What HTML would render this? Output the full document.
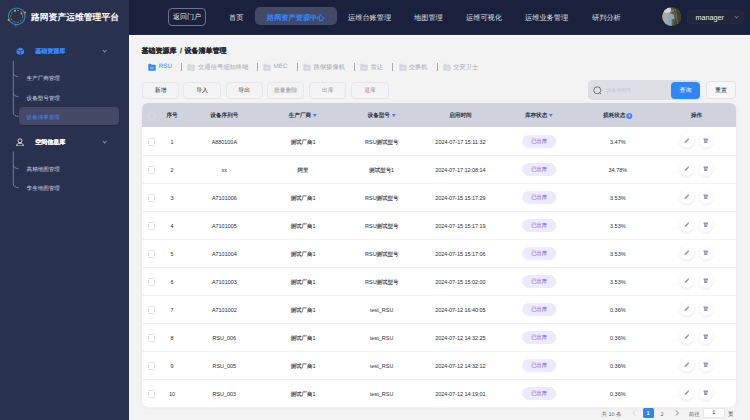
<!DOCTYPE html>
<html><head><meta charset="utf-8"><style>
*{margin:0;padding:0;box-sizing:border-box}
html,body{width:750px;height:420px;overflow:hidden;background:#f3f3f4;font-family:"Liberation Sans",sans-serif;position:relative;text-rendering:geometricPrecision}
.abs{position:absolute}
b,i{font-style:normal}
#side{position:absolute;left:0;top:0;width:129px;height:420px;background:#28324f}
#hdr{position:absolute;left:129px;top:0;width:621px;height:35px;background:#1a213c;border-bottom:0.6px solid #232a48}
#mainedge{position:absolute;left:129px;top:35px;width:621px;height:385px;border-top:1px solid #fbfbfc;border-left:1px solid #fbfbfc}
.title{position:absolute;left:31px;top:11.3px;font-size:8.8px;font-weight:bold;color:#fff;white-space:nowrap;line-height:12px}
.nav{position:absolute;top:9.3px;font-weight:500;height:17px;line-height:17px;font-size:7.2px;color:#dfe2ea;white-space:nowrap}
.portal{position:absolute;left:167.8px;top:8px;width:38.4px;height:18px;border:0.7px solid #6f7590;border-radius:4px;font-size:7px;color:#e6e8ef;text-align:center;line-height:16.2px;padding-top:1px;font-weight:500}
.pill{position:absolute;left:254.7px;top:7.1px;width:82px;height:18.3px;border-radius:5px;background:#434a67;color:#3088ff;font-size:7.2px;line-height:20.5px;padding-top:0.6px;text-align:center;font-weight:bold}
.avatar{position:absolute;left:662px;top:7.3px;width:19.3px;height:19.3px;border-radius:50%;background:linear-gradient(100deg,#9aa89a 0%,#7d9cc0 30%,#6b7f8a 45%,#5a5e44 65%,#3f4632 100%)}
.usr{position:absolute;left:686.7px;top:9.6px;width:57.3px;height:14.7px;border-radius:3px;background:#22263c;border:0.6px solid #262a40;color:#eceef2;font-size:7.2px;line-height:13.5px;padding-left:7.8px;text-rendering:optimizeLegibility}
.usr .chev{position:absolute;right:4.5px;top:4.8px;width:3px;height:3px;border-right:0.7px solid #6a7088;border-bottom:0.7px solid #6a7088;transform:rotate(45deg)}
.menu{position:absolute;left:35.3px;margin-top:1px;font-size:6px;white-space:nowrap;line-height:8px;font-weight:bold;-webkit-text-stroke:0.1px currentColor}
.sub{position:absolute;left:26.6px;margin-top:1.3px;font-weight:500;font-size:5.55px;color:#d8dbe4;white-space:nowrap;line-height:8px}
.schev{position:absolute;width:3.2px;height:3.2px;border-right:0.8px solid #8a90a8;border-bottom:0.8px solid #8a90a8;transform:rotate(45deg)}
.bc{position:absolute;left:141.6px;top:47.4px;font-size:7px;font-weight:bold;-webkit-text-stroke:0.1px currentColor;color:#1f2430;white-space:nowrap;line-height:10px}
.tab{position:absolute;top:63.8px;font-weight:500;font-size:6.3px;color:#a4a8b4;white-space:nowrap;line-height:8px}
.fold{position:absolute;top:62.7px;width:8px;height:8px}
.sep{position:absolute;top:62.5px;width:0.7px;height:8.3px;background:#a3a7b1}
.btn{position:absolute;top:82px;font-weight:500;width:37.3px;height:16.8px;border:0.7px solid #e6e7eb;border-radius:4px;background:#f3f3f5;font-size:5.8px;color:#1c1f26;text-align:center;line-height:15.4px;padding-top:1.1px}
.search{position:absolute;left:588px;top:80.2px;width:112px;height:19.7px;border-radius:4.5px;background:#dedfe5}
.qbtn{position:absolute;left:670.7px;top:81.8px;width:29.5px;height:17.2px;border-radius:4px;background:#2f86f6;color:#fff;font-size:6px;text-align:center;line-height:17.2px;padding-top:0.8px}
.rbtn{position:absolute;left:706px;top:81.3px;width:30px;height:17.7px;border-radius:4px;background:#f7f7f9;border:0.7px solid #e2e3e7;color:#222;font-size:6px;text-align:center;line-height:16.3px;padding-top:0.8px}
.card{position:absolute;left:142px;top:103.2px;width:593.8px;height:304.2px;background:#fff;border-radius:6px;box-shadow:0 1px 4px rgba(0,0,0,0.06)}
.thead{position:absolute;left:142px;top:103.2px;width:593.8px;height:24.2px;background:#d0d3de;border-radius:6px 6px 0 0}
.thead .h{position:absolute;top:1.8px;height:23.6px;line-height:23.6px;font-size:5.6px;font-weight:bold;color:#2a2f3c;transform:translateX(-50%);white-space:nowrap;margin-left:-142px}
.tri{display:inline-block;width:0;height:0;border-left:2.8px solid transparent;border-right:2.8px solid transparent;border-top:3.3px solid #3a86ff;margin-left:2px;margin-top:-0.5px;vertical-align:middle}
.info{display:inline-block;width:6px;height:6px;border-radius:50%;background:#3a86ff;color:#fff;font-size:4.5px;line-height:6px;text-align:center;font-style:normal;margin-left:1px;vertical-align:middle;letter-spacing:0}
.row{position:absolute;left:0;width:750px;height:28px}
.row::after{content:"";position:absolute;left:142px;width:593.8px;bottom:0;height:0.7px;background:#f0f1f4}
.row .c{position:absolute;top:0.5px;height:28px;line-height:28px;font-size:5.45px;color:#262a33;text-rendering:optimizeLegibility;transform:translateX(-50%);white-space:nowrap}
.z{font-weight:500;text-rendering:geometricPrecision;-webkit-text-stroke:0.12px currentColor}
.cb{position:absolute;left:148px;top:11px;width:7.2px;height:7.2px;border:0.7px solid #dfe1e6;border-radius:1.5px;background:#fff}
.hcb{top:8.4px;background:transparent;border-color:#d8dae2;margin-left:-142px}
.tag{position:absolute;top:7.9px;width:33.7px;height:13px;border-radius:6.5px;background:#edeafb;color:#8c76ee;-webkit-text-stroke:0.12px currentColor;font-size:5.3px;line-height:13px;padding-top:0.8px;text-align:center;transform:translateX(-50%)}
.ob{position:absolute;top:6.1px;width:14.6px;height:14.6px;border-radius:50%;background:#fff;box-shadow:0 0.8px 2.2px rgba(40,40,90,0.12);display:flex;align-items:center;justify-content:center}
.pg{position:absolute;top:409.6px;height:10px;line-height:10px;font-size:5.45px;color:#555;white-space:nowrap}

</style></head><body>
<div id="side"></div>
<div id="hdr"></div>
<div id="mainedge"></div>
<!-- logo -->
<svg class="abs" style="left:6px;top:6px" width="22" height="22" viewBox="0 0 22 22">
<circle cx="10.7" cy="10.3" r="8.3" fill="none" stroke="#2b88c8" stroke-width="1.1"/>
<circle cx="10.7" cy="10.3" r="6" fill="none" stroke="#c88a2a" stroke-width="0.8" stroke-dasharray="2 1.5"/>
<circle cx="9" cy="4.7" r="1" fill="#f0a020"/><circle cx="15.5" cy="7.5" r="0.9" fill="#f0a020"/><circle cx="19" cy="6.5" r="0.9" fill="#f0a020"/><circle cx="2.5" cy="14" r="0.9" fill="#f0a020"/>
<path d="M9.5 18.5 L10 20.5" stroke="#2a8fd4" stroke-width="1"/>
</svg>
<div class="title">路网资产运维管理平台</div>
<!-- header nav -->
<div class="portal">返回门户</div>
<div class="nav" style="left:229px">首页</div>
<div class="pill">路网资产资源中心</div>
<div class="nav" style="left:348px">运维台账管理</div>
<div class="nav" style="left:414px">地图管理</div>
<div class="nav" style="left:466px">运维可视化</div>
<div class="nav" style="left:525px">运维业务管理</div>
<div class="nav" style="left:592px">研判分析</div>
<svg class="abs" style="left:662px;top:7.3px" width="19.3" height="19.3" viewBox="0 0 20 20"><defs><clipPath id="av"><circle cx="10" cy="10" r="9.8"/></clipPath></defs><g clip-path="url(#av)"><rect width="20" height="20" fill="#5d6048"/><rect x="0" y="0" width="8" height="20" fill="#a9ab9b"/><ellipse cx="5.5" cy="3" rx="4" ry="3" fill="#d0d6da"/><path d="M6 20 L6.5 11 Q7 7 9 6.5 L12 8 L13 12 L10 13 L10 20 Z" fill="#86a6cc"/><path d="M12 4 Q15 6 14 12 L12 20 H20 V0 H12 Z" fill="#3d452f"/><path d="M14 2 L16 18" stroke="#7a6a4a" stroke-width="1"/><path d="M9 5 L13 3" stroke="#b09070" stroke-width="1"/></g></svg>
<div class="usr">manager<i class="chev"></i></div>
<!-- sidebar menu -->
<svg class="abs" style="left:15.5px;top:46.8px" width="8.6" height="8.6" viewBox="0 0 10 10">
<path d="M5 0.5 L9.3 2.8 V7.4 L5 9.6 L0.7 7.4 V2.8 Z" fill="#3a86ff"/>
<path d="M0.9 2.9 L5 5 L9.1 2.9 M5 5 V9.5" fill="none" stroke="#28324f" stroke-width="0.8"/>
</svg>
<div class="menu" style="top:47px;color:#3a86ff">基础资源库</div>
<i class="schev" style="left:102.5px;top:48.5px"></i>
<svg class="abs" style="left:0;top:0" width="30" height="200" viewBox="0 0 30 200"><g fill="none" stroke="#8a90a5" stroke-width="0.75"><path d="M13.3 60.8 V112.5 Q13.3 116.3 18.8 116.3"/><path d="M13.3 73.5 Q14 76.3 18.3 76.8"/><path d="M13.3 93.5 Q14 96.3 18.3 96.8"/><path d="M13.3 151.5 V183.5 Q13.3 187.5 18.8 187.7"/><path d="M13.3 165.5 Q14 168.3 18.3 168.8"/></g></svg>
<div class="sub" style="top:73.8px">生产厂商管理</div>
<div class="sub" style="top:93.5px">设备型号管理</div>
<div class="abs" style="left:18.8px;top:106.7px;width:100px;height:18.2px;border-radius:4px;background:#444a66;box-shadow:0 1px 2px rgba(10,15,30,0.25)"></div>
<div class="sub" style="top:112.3px;color:#3d8cff">设备清单管理</div>
<svg class="abs" style="left:16px;top:137.5px" width="8" height="8.5" viewBox="0 0 8 8.5">
<circle cx="4" cy="2.8" r="2" fill="none" stroke="#fff" stroke-width="0.8"/>
<path d="M0.6 8 C0.8 5.8 2.2 5.2 4 5.2 C5.8 5.2 7.2 5.8 7.4 8 Z" fill="none" stroke="#fff" stroke-width="0.8"/>
</svg>
<div class="menu" style="top:138px;color:#fff">空间信息库</div>
<i class="schev" style="left:102.5px;top:139.5px"></i>

<div class="sub" style="top:165.2px">高精地图管理</div>
<div class="sub" style="top:183.7px">孪生地图管理</div>
<!-- breadcrumb -->
<div class="bc">基础资源库<span style="margin:0 2.6px 0 3.4px">/</span>设备清单管理</div>
<svg class="fold" style="left:148px" viewBox="0 0 8 8"><path d="M0.3 1.6 Q0.3 0.8 1.1 0.8 H3 L3.8 1.7 H6.9 Q7.7 1.7 7.7 2.5 V6.9 Q7.7 7.7 6.9 7.7 H1.1 Q0.3 7.7 0.3 6.9 Z" fill="#3a86ff"/><path d="M2.2 5 H5.8" stroke="#fff" stroke-width="0.8"/></svg>
<div class="tab" style="left:158.8px;top:62.8px;color:#3a86ff">RSU</div>
<div class="sep" style="left:180.7px"></div>
<svg class="fold" style="left:187px" viewBox="0 0 8 8"><path d="M0.3 1.6 Q0.3 0.8 1.1 0.8 H3 L3.8 1.7 H6.9 Q7.7 1.7 7.7 2.5 V6.9 Q7.7 7.7 6.9 7.7 H1.1 Q0.3 7.7 0.3 6.9 Z" fill="#d3d6de"/><path d="M2.2 5 H5.8" stroke="#eef0f4" stroke-width="0.8"/></svg>
<div class="tab" style="left:198px">交通信号感知终端</div>
<div class="sep" style="left:256.7px"></div>
<svg class="fold" style="left:263px" viewBox="0 0 8 8"><path d="M0.3 1.6 Q0.3 0.8 1.1 0.8 H3 L3.8 1.7 H6.9 Q7.7 1.7 7.7 2.5 V6.9 Q7.7 7.7 6.9 7.7 H1.1 Q0.3 7.7 0.3 6.9 Z" fill="#d3d6de"/><path d="M2.2 5 H5.8" stroke="#eef0f4" stroke-width="0.8"/></svg>
<div class="tab" style="left:273.5px;top:62.8px">MEC</div>
<div class="sep" style="left:296.7px"></div>
<svg class="fold" style="left:303px" viewBox="0 0 8 8"><path d="M0.3 1.6 Q0.3 0.8 1.1 0.8 H3 L3.8 1.7 H6.9 Q7.7 1.7 7.7 2.5 V6.9 Q7.7 7.7 6.9 7.7 H1.1 Q0.3 7.7 0.3 6.9 Z" fill="#d3d6de"/><path d="M2.2 5 H5.8" stroke="#eef0f4" stroke-width="0.8"/></svg>
<div class="tab" style="left:313.5px">路侧摄像机</div>
<div class="sep" style="left:353.5px"></div>
<svg class="fold" style="left:360px" viewBox="0 0 8 8"><path d="M0.3 1.6 Q0.3 0.8 1.1 0.8 H3 L3.8 1.7 H6.9 Q7.7 1.7 7.7 2.5 V6.9 Q7.7 7.7 6.9 7.7 H1.1 Q0.3 7.7 0.3 6.9 Z" fill="#d3d6de"/><path d="M2.2 5 H5.8" stroke="#eef0f4" stroke-width="0.8"/></svg>
<div class="tab" style="left:370.5px">雷达</div>
<div class="sep" style="left:392px"></div>
<svg class="fold" style="left:398.8px" viewBox="0 0 8 8"><path d="M0.3 1.6 Q0.3 0.8 1.1 0.8 H3 L3.8 1.7 H6.9 Q7.7 1.7 7.7 2.5 V6.9 Q7.7 7.7 6.9 7.7 H1.1 Q0.3 7.7 0.3 6.9 Z" fill="#d3d6de"/><path d="M2.2 5 H5.8" stroke="#eef0f4" stroke-width="0.8"/></svg>
<div class="tab" style="left:408.7px">交换机</div>
<div class="sep" style="left:436.7px"></div>
<svg class="fold" style="left:443px" viewBox="0 0 8 8"><path d="M0.3 1.6 Q0.3 0.8 1.1 0.8 H3 L3.8 1.7 H6.9 Q7.7 1.7 7.7 2.5 V6.9 Q7.7 7.7 6.9 7.7 H1.1 Q0.3 7.7 0.3 6.9 Z" fill="#d3d6de"/><path d="M2.2 5 H5.8" stroke="#eef0f4" stroke-width="0.8"/></svg>
<div class="tab" style="left:453px">交安卫士</div>
<!-- buttons -->
<div class="btn" style="left:142px">新增</div>
<div class="btn" style="left:183.3px">导入</div>
<div class="btn" style="left:225.5px">导出</div>
<div class="btn" style="left:267px;color:#8a8d96">批量删除</div>
<div class="btn" style="left:309px;color:#8a8d96">出库</div>
<div class="btn" style="left:351.3px;color:#8a8d96">退库</div>
<div class="search"></div>
<svg class="abs" style="left:592.5px;top:85.5px" width="9.5" height="9.5" viewBox="0 0 10 10">
<circle cx="4.5" cy="4.5" r="3.7" fill="none" stroke="#4a4d55" stroke-width="0.75"/><path d="M7.1 7.1 L8.4 8.4" stroke="#4a4d55" stroke-width="0.75"/>
</svg>
<div class="abs" style="left:606.2px;top:86.6px;font-size:5px;color:#bfc2ca;line-height:8px">设备序列号</div>
<div class="qbtn">查询</div>
<div class="rbtn">重置</div>
<!-- table -->
<div class="card"></div>
<div class="thead"><span class="cb hcb"></span><span class="h" style="left:172px">序号</span><span class="h" style="left:224.34px">设备序列号</span><span class="h" style="left:303.03px">生产厂商<i class="tri"></i></span><span class="h" style="left:381.73px">设备型号<i class="tri"></i></span><span class="h" style="left:460.41px">启用时间</span><span class="h" style="left:539.11px">库存状态<i class="tri"></i></span><span class="h" style="left:617.80px">损耗状态<i class="info">i</i></span><span class="h" style="left:696.49px">操作</span></div>
<div class="row" style="top:127.40px"><span class="cb"></span><span class="c" style="left:172px">1</span><span class="c" style="left:224.34px">A880100A</span><span class="c" style="left:303.03px"><b class="z">测试厂商</b>1</span><span class="c" style="left:381.73px">RSU<b class="z">测试型号</b></span><span class="c" style="left:460.41px">2024-07-17 15:11:32</span><span class="tag" style="left:539.11px">已出库</span><span class="c" style="left:617.80px">3.47%</span><span class="ob" style="left:679.38px"><svg viewBox="0 0 10 10" width="7.5" height="7.5"><path d="M2 8 L2.4 6.2 L6.7 1.9 Q7.2 1.5 7.7 1.9 L8.1 2.3 Q8.5 2.8 8.1 3.3 L3.8 7.6 Z" fill="#9092b3"/><path d="M6.2 2.6 L7.4 3.8" stroke="#fff" stroke-width="0.5"/></svg></span><span class="ob" style="left:698.78px"><svg viewBox="0 0 10 10" width="7.5" height="7.5"><path d="M1.9 2 H8.1 V3.5 H1.9 Z M2.7 3.5 H7.3 L6.9 8 H3.1 Z" fill="#9092b3"/><path d="M3.3 5.2 H6.7" stroke="#fff" stroke-width="0.6"/></svg></span></div><div class="row" style="top:155.40px"><span class="cb"></span><span class="c" style="left:172px">2</span><span class="c" style="left:224.34px">xx</span><span class="c" style="left:303.03px"><b class="z">阿里</b></span><span class="c" style="left:381.73px"><b class="z">测试型号</b>1</span><span class="c" style="left:460.41px">2024-07-17 12:08:14</span><span class="tag" style="left:539.11px">已出库</span><span class="c" style="left:617.80px">34.78%</span><span class="ob" style="left:679.38px"><svg viewBox="0 0 10 10" width="7.5" height="7.5"><path d="M2 8 L2.4 6.2 L6.7 1.9 Q7.2 1.5 7.7 1.9 L8.1 2.3 Q8.5 2.8 8.1 3.3 L3.8 7.6 Z" fill="#9092b3"/><path d="M6.2 2.6 L7.4 3.8" stroke="#fff" stroke-width="0.5"/></svg></span><span class="ob" style="left:698.78px"><svg viewBox="0 0 10 10" width="7.5" height="7.5"><path d="M1.9 2 H8.1 V3.5 H1.9 Z M2.7 3.5 H7.3 L6.9 8 H3.1 Z" fill="#9092b3"/><path d="M3.3 5.2 H6.7" stroke="#fff" stroke-width="0.6"/></svg></span></div><div class="row" style="top:183.40px"><span class="cb"></span><span class="c" style="left:172px">3</span><span class="c" style="left:224.34px">A7101006</span><span class="c" style="left:303.03px"><b class="z">测试厂商</b>1</span><span class="c" style="left:381.73px">RSU<b class="z">测试型号</b></span><span class="c" style="left:460.41px">2024-07-15 15:17:29</span><span class="tag" style="left:539.11px">已出库</span><span class="c" style="left:617.80px">3.53%</span><span class="ob" style="left:679.38px"><svg viewBox="0 0 10 10" width="7.5" height="7.5"><path d="M2 8 L2.4 6.2 L6.7 1.9 Q7.2 1.5 7.7 1.9 L8.1 2.3 Q8.5 2.8 8.1 3.3 L3.8 7.6 Z" fill="#9092b3"/><path d="M6.2 2.6 L7.4 3.8" stroke="#fff" stroke-width="0.5"/></svg></span><span class="ob" style="left:698.78px"><svg viewBox="0 0 10 10" width="7.5" height="7.5"><path d="M1.9 2 H8.1 V3.5 H1.9 Z M2.7 3.5 H7.3 L6.9 8 H3.1 Z" fill="#9092b3"/><path d="M3.3 5.2 H6.7" stroke="#fff" stroke-width="0.6"/></svg></span></div><div class="row" style="top:211.40px"><span class="cb"></span><span class="c" style="left:172px">4</span><span class="c" style="left:224.34px">A7101005</span><span class="c" style="left:303.03px"><b class="z">测试厂商</b>1</span><span class="c" style="left:381.73px">RSU<b class="z">测试型号</b></span><span class="c" style="left:460.41px">2024-07-15 15:17:19</span><span class="tag" style="left:539.11px">已出库</span><span class="c" style="left:617.80px">3.53%</span><span class="ob" style="left:679.38px"><svg viewBox="0 0 10 10" width="7.5" height="7.5"><path d="M2 8 L2.4 6.2 L6.7 1.9 Q7.2 1.5 7.7 1.9 L8.1 2.3 Q8.5 2.8 8.1 3.3 L3.8 7.6 Z" fill="#9092b3"/><path d="M6.2 2.6 L7.4 3.8" stroke="#fff" stroke-width="0.5"/></svg></span><span class="ob" style="left:698.78px"><svg viewBox="0 0 10 10" width="7.5" height="7.5"><path d="M1.9 2 H8.1 V3.5 H1.9 Z M2.7 3.5 H7.3 L6.9 8 H3.1 Z" fill="#9092b3"/><path d="M3.3 5.2 H6.7" stroke="#fff" stroke-width="0.6"/></svg></span></div><div class="row" style="top:239.40px"><span class="cb"></span><span class="c" style="left:172px">5</span><span class="c" style="left:224.34px">A7101004</span><span class="c" style="left:303.03px"><b class="z">测试厂商</b>1</span><span class="c" style="left:381.73px">RSU<b class="z">测试型号</b></span><span class="c" style="left:460.41px">2024-07-15 15:17:06</span><span class="tag" style="left:539.11px">已出库</span><span class="c" style="left:617.80px">3.53%</span><span class="ob" style="left:679.38px"><svg viewBox="0 0 10 10" width="7.5" height="7.5"><path d="M2 8 L2.4 6.2 L6.7 1.9 Q7.2 1.5 7.7 1.9 L8.1 2.3 Q8.5 2.8 8.1 3.3 L3.8 7.6 Z" fill="#9092b3"/><path d="M6.2 2.6 L7.4 3.8" stroke="#fff" stroke-width="0.5"/></svg></span><span class="ob" style="left:698.78px"><svg viewBox="0 0 10 10" width="7.5" height="7.5"><path d="M1.9 2 H8.1 V3.5 H1.9 Z M2.7 3.5 H7.3 L6.9 8 H3.1 Z" fill="#9092b3"/><path d="M3.3 5.2 H6.7" stroke="#fff" stroke-width="0.6"/></svg></span></div><div class="row" style="top:267.40px"><span class="cb"></span><span class="c" style="left:172px">6</span><span class="c" style="left:224.34px">A7101003</span><span class="c" style="left:303.03px"><b class="z">测试厂商</b>1</span><span class="c" style="left:381.73px">RSU<b class="z">测试型号</b></span><span class="c" style="left:460.41px">2024-07-15 15:02:00</span><span class="tag" style="left:539.11px">已出库</span><span class="c" style="left:617.80px">3.53%</span><span class="ob" style="left:679.38px"><svg viewBox="0 0 10 10" width="7.5" height="7.5"><path d="M2 8 L2.4 6.2 L6.7 1.9 Q7.2 1.5 7.7 1.9 L8.1 2.3 Q8.5 2.8 8.1 3.3 L3.8 7.6 Z" fill="#9092b3"/><path d="M6.2 2.6 L7.4 3.8" stroke="#fff" stroke-width="0.5"/></svg></span><span class="ob" style="left:698.78px"><svg viewBox="0 0 10 10" width="7.5" height="7.5"><path d="M1.9 2 H8.1 V3.5 H1.9 Z M2.7 3.5 H7.3 L6.9 8 H3.1 Z" fill="#9092b3"/><path d="M3.3 5.2 H6.7" stroke="#fff" stroke-width="0.6"/></svg></span></div><div class="row" style="top:295.40px"><span class="cb"></span><span class="c" style="left:172px">7</span><span class="c" style="left:224.34px">A7101002</span><span class="c" style="left:303.03px"><b class="z">测试厂商</b>1</span><span class="c" style="left:381.73px">test_RSU</span><span class="c" style="left:460.41px">2024-07-12 16:40:05</span><span class="tag" style="left:539.11px">已出库</span><span class="c" style="left:617.80px">0.36%</span><span class="ob" style="left:679.38px"><svg viewBox="0 0 10 10" width="7.5" height="7.5"><path d="M2 8 L2.4 6.2 L6.7 1.9 Q7.2 1.5 7.7 1.9 L8.1 2.3 Q8.5 2.8 8.1 3.3 L3.8 7.6 Z" fill="#9092b3"/><path d="M6.2 2.6 L7.4 3.8" stroke="#fff" stroke-width="0.5"/></svg></span><span class="ob" style="left:698.78px"><svg viewBox="0 0 10 10" width="7.5" height="7.5"><path d="M1.9 2 H8.1 V3.5 H1.9 Z M2.7 3.5 H7.3 L6.9 8 H3.1 Z" fill="#9092b3"/><path d="M3.3 5.2 H6.7" stroke="#fff" stroke-width="0.6"/></svg></span></div><div class="row" style="top:323.40px"><span class="cb"></span><span class="c" style="left:172px">8</span><span class="c" style="left:224.34px">RSU_006</span><span class="c" style="left:303.03px"><b class="z">测试厂商</b>1</span><span class="c" style="left:381.73px">test_RSU</span><span class="c" style="left:460.41px">2024-07-12 14:32:25</span><span class="tag" style="left:539.11px">已出库</span><span class="c" style="left:617.80px">0.36%</span><span class="ob" style="left:679.38px"><svg viewBox="0 0 10 10" width="7.5" height="7.5"><path d="M2 8 L2.4 6.2 L6.7 1.9 Q7.2 1.5 7.7 1.9 L8.1 2.3 Q8.5 2.8 8.1 3.3 L3.8 7.6 Z" fill="#9092b3"/><path d="M6.2 2.6 L7.4 3.8" stroke="#fff" stroke-width="0.5"/></svg></span><span class="ob" style="left:698.78px"><svg viewBox="0 0 10 10" width="7.5" height="7.5"><path d="M1.9 2 H8.1 V3.5 H1.9 Z M2.7 3.5 H7.3 L6.9 8 H3.1 Z" fill="#9092b3"/><path d="M3.3 5.2 H6.7" stroke="#fff" stroke-width="0.6"/></svg></span></div><div class="row" style="top:351.40px"><span class="cb"></span><span class="c" style="left:172px">9</span><span class="c" style="left:224.34px">RSU_005</span><span class="c" style="left:303.03px"><b class="z">测试厂商</b>1</span><span class="c" style="left:381.73px">test_RSU</span><span class="c" style="left:460.41px">2024-07-12 14:32:12</span><span class="tag" style="left:539.11px">已出库</span><span class="c" style="left:617.80px">0.36%</span><span class="ob" style="left:679.38px"><svg viewBox="0 0 10 10" width="7.5" height="7.5"><path d="M2 8 L2.4 6.2 L6.7 1.9 Q7.2 1.5 7.7 1.9 L8.1 2.3 Q8.5 2.8 8.1 3.3 L3.8 7.6 Z" fill="#9092b3"/><path d="M6.2 2.6 L7.4 3.8" stroke="#fff" stroke-width="0.5"/></svg></span><span class="ob" style="left:698.78px"><svg viewBox="0 0 10 10" width="7.5" height="7.5"><path d="M1.9 2 H8.1 V3.5 H1.9 Z M2.7 3.5 H7.3 L6.9 8 H3.1 Z" fill="#9092b3"/><path d="M3.3 5.2 H6.7" stroke="#fff" stroke-width="0.6"/></svg></span></div><div class="row" style="top:379.40px"><span class="cb"></span><span class="c" style="left:172px">10</span><span class="c" style="left:224.34px">RSU_003</span><span class="c" style="left:303.03px"><b class="z">测试厂商</b>1</span><span class="c" style="left:381.73px">test_RSU</span><span class="c" style="left:460.41px">2024-07-12 14:19:01</span><span class="tag" style="left:539.11px">已出库</span><span class="c" style="left:617.80px">0.36%</span><span class="ob" style="left:679.38px"><svg viewBox="0 0 10 10" width="7.5" height="7.5"><path d="M2 8 L2.4 6.2 L6.7 1.9 Q7.2 1.5 7.7 1.9 L8.1 2.3 Q8.5 2.8 8.1 3.3 L3.8 7.6 Z" fill="#9092b3"/><path d="M6.2 2.6 L7.4 3.8" stroke="#fff" stroke-width="0.5"/></svg></span><span class="ob" style="left:698.78px"><svg viewBox="0 0 10 10" width="7.5" height="7.5"><path d="M1.9 2 H8.1 V3.5 H1.9 Z M2.7 3.5 H7.3 L6.9 8 H3.1 Z" fill="#9092b3"/><path d="M3.3 5.2 H6.7" stroke="#fff" stroke-width="0.6"/></svg></span></div>
<!-- pagination -->
<div class="pg" style="left:601.5px">共 10 条</div>
<svg class="abs" style="left:631.8px;top:410px" width="4.4" height="6" viewBox="0 0 4.4 6"><path d="M3.4 0.5 L1 3 L3.4 5.5" fill="none" stroke="#c0c4cc" stroke-width="0.7"/></svg>
<div class="abs" style="left:642.5px;top:408px;width:11px;height:10px;background:#2f86f6;border-radius:1.5px;color:#fff;font-size:5.6px;line-height:10px;padding-top:0.8px;text-align:center;font-weight:bold">1</div>
<div class="pg" style="left:660.5px">2</div>
<svg class="abs" style="left:675.2px;top:410px" width="4.4" height="6" viewBox="0 0 4.4 6"><path d="M1 0.5 L3.4 3 L1 5.5" fill="none" stroke="#505560" stroke-width="0.7"/></svg>
<div class="pg" style="left:688.7px">前往</div>
<div class="abs" style="left:703px;top:407.6px;width:21.6px;height:10.4px;background:#fff;border:0.6px solid #e4e6ea;border-radius:2px;font-size:5.6px;line-height:9px;padding-top:0.8px;text-align:center;color:#333">1</div>
<div class="pg" style="left:728px">页</div>

</body></html>
